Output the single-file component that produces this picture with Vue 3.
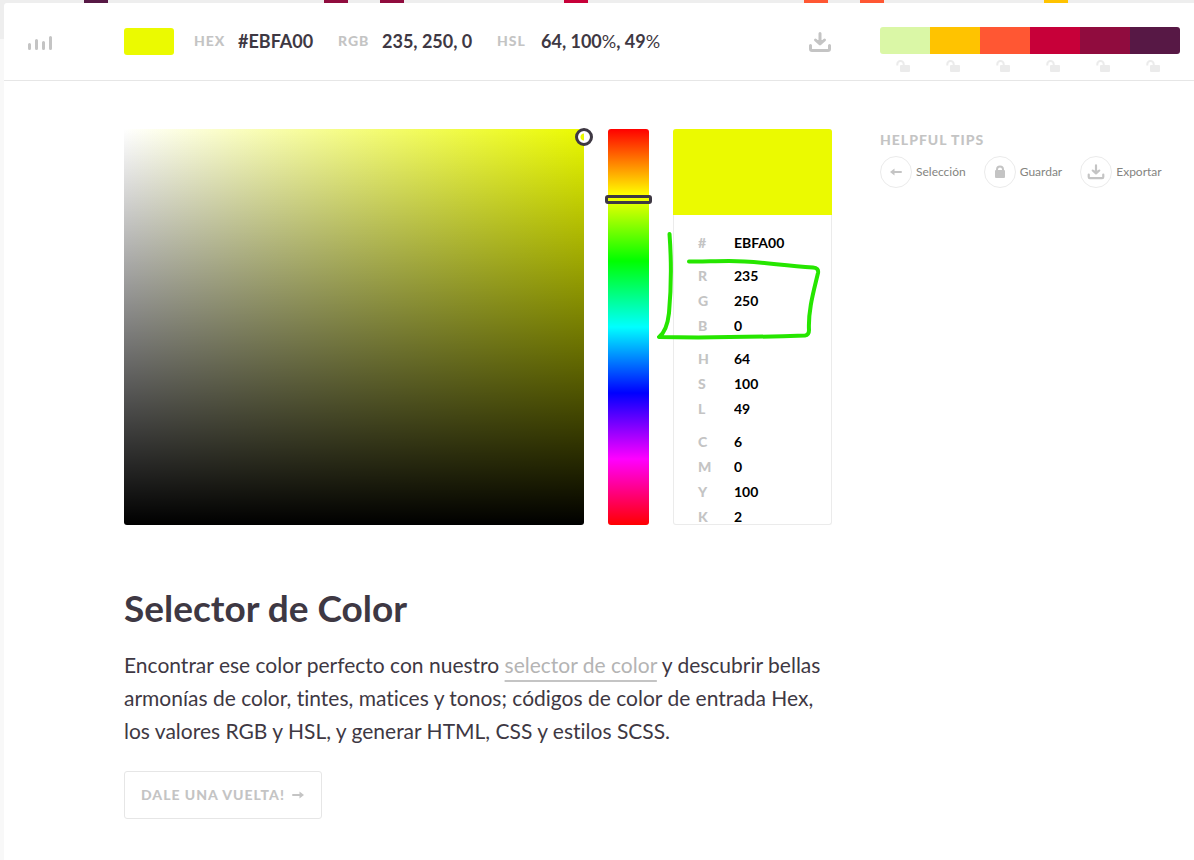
<script setup>
import { ref } from 'vue'

const confetti = [
  { x: 84, color: '#571845' },
  { x: 324, color: '#900c3e' },
  { x: 380, color: '#900c3e' },
  { x: 564, color: '#c70039' },
  { x: 804, color: '#ff5733' },
  { x: 860, color: '#ff5733' },
  { x: 1044, color: '#ffc300' }
]

const palette = ['#daf7a6', '#ffc300', '#ff5733', '#c70039', '#900c3e', '#571845']

const hue = ref(64)

const groups = ref([
  [{ key: '#', value: 'EBFA00' }],
  [{ key: 'R', value: '235' }, { key: 'G', value: '250' }, { key: 'B', value: '0' }],
  [{ key: 'H', value: '64' }, { key: 'S', value: '100' }, { key: 'L', value: '49' }],
  [{ key: 'C', value: '6' }, { key: 'M', value: '0' }, { key: 'Y', value: '100' }, { key: 'K', value: '2' }]
])
</script>

<template>
  <div class="page">
    <svg class="confetti" height="3" aria-hidden="true">
      <rect v-for="c in confetti" :key="c.x" :x="c.x" y="0" width="24" height="3" :fill="c.color" />
    </svg>

    <div class="sheet">
      <header class="topbar">
        <button class="icon-btn menu" type="button" aria-label="Menu">
          <svg width="26" height="16" viewBox="0 0 26 16" stroke="#c4c4c4" stroke-width="3" stroke-linecap="round">
            <path d="M2.500 8.500v4M9.500 4.500v8M16.500 6.500v6M23.500 1.500v11" />
          </svg>
        </button>

        <div class="current">
          <span class="swatch"></span>
          <dl class="codes">
            <div class="code"><dt>HEX</dt><dd>#EBFA00</dd></div>
            <div class="code"><dt>RGB</dt><dd>235, 250, 0</dd></div>
            <div class="code"><dt>HSL</dt><dd>64, 100<span class="pct">%</span>, 49<span class="pct">%</span></dd></div>
          </dl>
          <button class="icon-btn" type="button" aria-label="Download">
            <svg width="24" height="22" viewBox="0 0 24 22" fill="none" stroke="#c4c4c4" stroke-width="3" stroke-linecap="round" stroke-linejoin="round">
              <path d="M12 2.500v9M7.500 9l4.500 4 4.500-4M10 10.500h4" />
              <path d="M2.500 14.500v3.500q0 1.500 1.500 1.500h16q1.500 0 1.500-1.500v-3.500" />
            </svg>
          </button>
        </div>

        <div class="palette">
          <div class="chips">
            <span v-for="c in palette" :key="c" class="chip" :style="{ background: c }"></span>
          </div>
          <div class="locks">
            <button v-for="c in palette" :key="c" class="icon-btn" type="button" :aria-label="'Lock ' + c">
              <svg width="14" height="12" viewBox="0 0 14 12">
                <path d="M1.300 5.500V4.200a3.200 3.200 0 0 1 6.400 0V6" fill="none" stroke="#ebebeb" stroke-width="2" />
                <rect x="4" y="5" width="10" height="7" rx="1" fill="#ebebeb" />
              </svg>
            </button>
          </div>
        </div>
      </header>

      <main class="content">
        <div class="primary">
          <section class="picker">
            <div class="field"><button class="handle" type="button" aria-label="Color"></button></div>
            <div class="hue">
              <input v-model="hue" class="hue-range" type="range" min="0" max="360" aria-label="Hue" />
            </div>
            <div class="values">
              <div class="preview"></div>
              <div class="groups">
                <div v-for="(g, i) in groups" :key="i" class="group">
                  <div v-for="row in g" :key="row.key" class="row">
                    <label :for="'v-' + i + row.key">{{ row.key }}</label>
                    <input :id="'v-' + i + row.key" v-model="row.value" type="text" />
                  </div>
                </div>
              </div>
              <svg class="marker" width="166" height="112" viewBox="0 0 166 112" fill="none" stroke="#26e600" stroke-width="4" stroke-linecap="round" stroke-linejoin="round" aria-hidden="true">
                <path d="M12.500 3C14.500 30 14 60 12 82Q10 100 2 106C50 107 100 106 148 104.500Q152 104 152 99C151 79 157 59 161 42Q162 37 156 36.500C120 34 100 30 72 30C55 30 45 31 32 30.500" />
              </svg>
            </div>
          </section>

          <section class="intro">
            <h1>Selector de Color</h1>
            <p>
              Encontrar ese color perfecto con nuestro <a href="#">selector de color</a> y descubrir bellas
              armonías de color, tintes, matices y tonos; códigos de color de entrada Hex,
              los valores RGB y HSL, y generar HTML, CSS y estilos SCSS.
            </p>
            <button class="spin" type="button">
              DALE UNA VUELTA!
              <svg width="12" height="8" viewBox="0 0 12 8" aria-hidden="true">
                <path d="M1 4h8" stroke="#c4c4c4" stroke-width="2" stroke-linecap="round" />
                <path d="M7.500 0.500L12 4 7.500 7.500z" fill="#c4c4c4" />
              </svg>
            </button>
          </section>
        </div>

        <aside class="tips">
          <h2>HELPFUL TIPS</h2>
          <ul>
            <li>
              <span class="disc">
                <svg width="12" height="8" viewBox="0 0 12 8">
                  <path d="M3 4h8" stroke="#c4c4c4" stroke-width="2" stroke-linecap="round" />
                  <path d="M4.500 0.500L0 4l4.500 3.500z" fill="#c4c4c4" />
                </svg>
              </span>
              <span class="tip">Selección</span>
            </li>
            <li>
              <span class="disc">
                <svg width="10" height="14" viewBox="0 0 10 14">
                  <path d="M2 7V4.500a3 3 0 0 1 6 0V7" fill="none" stroke="#c4c4c4" stroke-width="2" />
                  <rect y="5" width="10" height="8" rx="1" fill="#c4c4c4" />
                </svg>
              </span>
              <span class="tip">Guardar</span>
            </li>
            <li>
              <span class="disc">
                <svg width="18" height="16" viewBox="0 0 24 22" fill="none" stroke="#c4c4c4" stroke-width="3" stroke-linecap="round" stroke-linejoin="round">
                  <path d="M12 2v9M7.500 9l4.500 4 4.500-4M10 10.500h4" />
                  <path d="M2 14.500v3.500q0 1.500 1.500 1.500h17q1.500 0 1.500-1.500v-3.500" />
                </svg>
              </span>
              <span class="tip">Exportar</span>
            </li>
          </ul>
        </aside>
      </main>
    </div>
  </div>
</template>

<style>
body {
  margin: 0;
  background: #fff;
}
</style>

<style scoped>
.page {
  display: flex;
  flex-direction: column;
  min-height: 100vh;
  padding-left: 4px;
  box-sizing: border-box;
  background: linear-gradient(#eee 39px, #f8f8f8 39px);
  color: #3e3843;
  font-family: Lato, "Open Sans", sans-serif;
  font-variant-ligatures: none;
}
.confetti {
  display: block;
  width: calc(100% + 4px);
  margin-left: -4px;
}
.sheet {
  flex: 1;
  background: #fff;
  border-top-left-radius: 3px;
}
h1, h2, p, dl, dd, ul {
  margin: 0;
  padding: 0;
}
button {
  font-family: inherit;
  cursor: pointer;
}
.icon-btn {
  display: block;
  padding: 0;
  border: 0;
  background: none;
}
.icon-btn svg {
  display: block;
}
.topbar {
  display: flex;
  align-items: flex-start;
  padding: 24px 14px 8px 0;
  border-bottom: 1px solid #e6e6e6;
}
.menu {
  width: 120px;
  padding: 9px 0 0 23px;
  box-sizing: border-box;
}
.current {
  flex: 1;
  display: flex;
  align-items: center;
  height: 29px;
  margin-right: 48px;
}
.swatch {
  width: 50px;
  height: 27px;
  margin-right: 20px;
  border-radius: 3px;
  background: #ebfa00;
}
.codes {
  flex: 1;
  display: grid;
  grid-template-columns: 144px 159px 1fr;
  padding-bottom: 2px;
}
.code {
  display: flex;
  align-items: center;
}
dt {
  width: 44px;
  color: #c4c4c4;
  font-size: 14px;
  font-weight: 900;
  letter-spacing: 1px;
}
dd {
  font-size: 18px;
  line-height: 24px;
  font-weight: 700;
  white-space: nowrap;
}
.pct {
  font-weight: 400;
}
.palette {
  width: 300px;
}
.chips {
  display: flex;
  height: 27px;
  border-radius: 3px;
  overflow: hidden;
}
.chip {
  flex: 1;
}
.locks {
  display: grid;
  grid-template-columns: repeat(6, 1fr);
  margin-top: 6px;
}
.locks .icon-btn {
  padding-left: 16px;
}
.content {
  display: flex;
  gap: 48px;
  padding: 48px 14px 40px 120px;
}
.primary {
  flex: 1;
}
.picker {
  display: flex;
  gap: 24px;
}
.field {
  flex: 1;
  position: relative;
  border-radius: 3px;
  background: linear-gradient(to top, #000, transparent), linear-gradient(to right, #fff, #ebfa00);
}
.handle {
  position: absolute;
  top: -1px;
  right: -9px;
  width: 18px;
  height: 18px;
  padding: 0;
  border: 3px solid #3e3843;
  border-radius: 50%;
  background: linear-gradient(to right, transparent 50%, #fff 50%), radial-gradient(circle, #ebfa00 3px, #fff 4px);
}
.hue {
  position: relative;
  width: 41px;
  border-radius: 3px;
  background: linear-gradient(#f00, #ff0, #0f0, #0ff, #00f, #f0f, #f00);
}
.hue-range {
  position: absolute;
  inset: -4px -3px;
  width: 47px;
  height: calc(100% + 8px);
  margin: 0;
  appearance: none;
  writing-mode: vertical-lr;
  background: none;
}
.hue-range::-webkit-slider-thumb {
  appearance: none;
  width: 47px;
  height: 9px;
  box-sizing: border-box;
  border: 3px solid #3e3843;
  border-radius: 3px;
  background: transparent;
}
.values {
  position: relative;
  width: 159px;
  box-sizing: border-box;
  border: 1px solid #ebebeb;
  border-top: 0;
  border-radius: 3px;
}
.preview {
  height: 86px;
  margin: 0 -1px;
  border-radius: 3px 3px 0 0;
  background: #ebfa00;
}
.groups {
  display: grid;
  gap: 18px;
  padding: 20px 24px 0;
}
.group {
  display: grid;
  gap: 10px;
}
.row {
  display: flex;
  height: 15px;
  font-size: 14px;
  line-height: 15px;
  font-weight: 700;
}
.row label {
  width: 36px;
  color: #c4c4c4;
  font-weight: 900;
}
.row input {
  flex: 1;
  min-width: 0;
  padding: 0;
  border: 0;
  background: none;
  color: #000;
  font: inherit;
}
.marker {
  position: absolute;
  top: 102px;
  left: -17px;
  pointer-events: none;
}
.intro {
  margin-top: 59px;
}
h1 {
  font-size: 37px;
  line-height: 48px;
  font-weight: 700;
}
p {
  margin-top: 16px;
  font-size: 21px;
  line-height: 33px;
}
p a {
  color: #b4b4b4;
  text-decoration: underline 2px #c4c4c4;
  text-underline-offset: 7px;
  text-decoration-skip-ink: none;
}
.spin {
  display: flex;
  align-items: center;
  gap: 7px;
  margin-top: 24px;
  padding: 15px 17px 15px 16px;
  border: 1px solid #e6e6e6;
  border-radius: 3px;
  background: #fff;
  color: #c4c4c4;
  font-size: 14px;
  line-height: 16px;
  font-weight: 900;
  letter-spacing: 1px;
}
.tips {
  width: 300px;
}
h2 {
  margin-top: 2px;
  color: #c4c4c4;
  font-size: 14px;
  line-height: 18px;
  font-weight: 900;
  letter-spacing: 1px;
}
.tips ul {
  display: flex;
  gap: 18px;
  margin-top: 7px;
  list-style: none;
}
.tips li {
  display: flex;
  align-items: center;
  gap: 4px;
  color: #84847f;
  font-size: 12px;
}
.tip {
  padding-bottom: 2px;
}
.disc {
  display: grid;
  place-items: center;
  width: 32px;
  height: 32px;
  box-sizing: border-box;
  border: 1px solid #ebebeb;
  border-radius: 50%;
}
</style>
